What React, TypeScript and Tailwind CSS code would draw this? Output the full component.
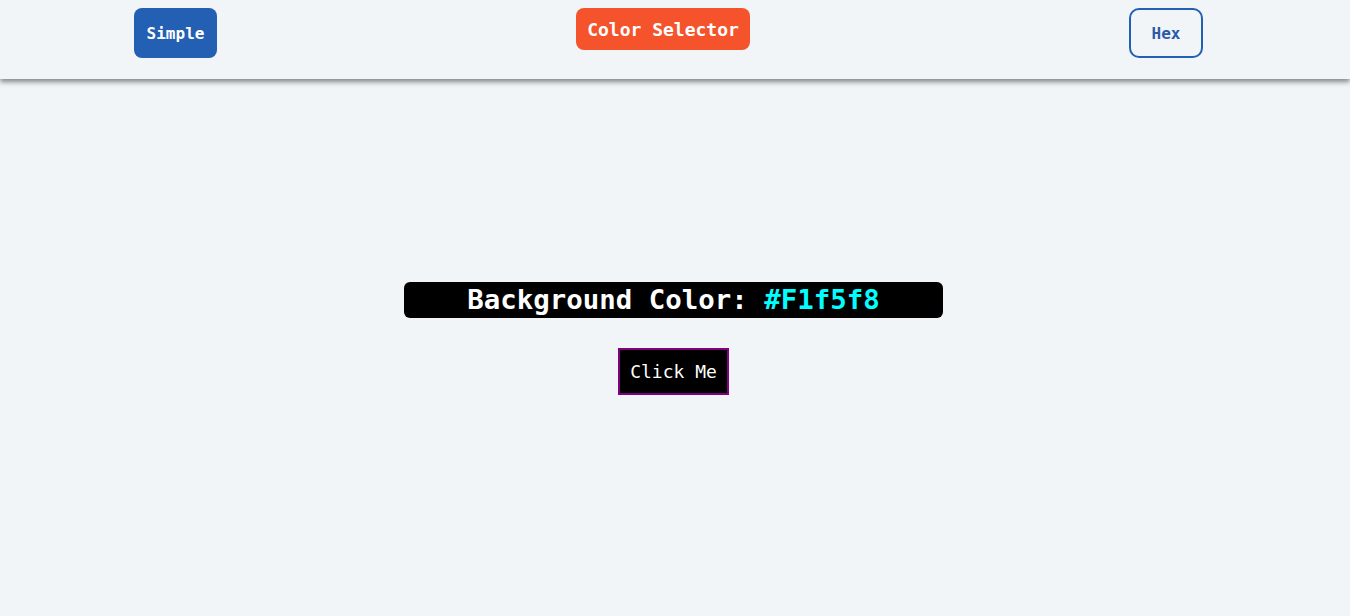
export default function App() {
  return (
    <div className="min-h-screen bg-[#f1f5f8] font-['DejaVu_Sans_Mono',monospace]">
      {/* Top bar */}
      <header className="flex h-[79px] items-start justify-between bg-[#f1f5f8] pl-[134px] pr-[147px] pt-2 shadow-[0_3px_5px_rgba(0,0,0,0.45)]">
        <button className="h-[50px] w-[83px] rounded-lg bg-[#2360b3] pt-[2px] text-[16px] font-bold text-white">
          Simple
        </button>
        <button className="mr-[20px] h-[42px] w-[174px] rounded-lg bg-[#f5532c] text-[18px] font-bold text-white">
          Color Selector
        </button>
        <button className="h-[50px] w-[74px] rounded-[10px] border-2 border-[#2360b3] pt-[2px] text-[16px] font-bold text-[#2b5aa8]">
          Hex
        </button>
      </header>

      <main className="flex flex-col items-center pr-[3px] pt-[203px]">
        <div className="flex h-[36px] w-[539px] items-center justify-center rounded-md bg-black text-[27.4px] font-bold text-white">
          Background Color:&nbsp;<span className="text-[#00ffff]">#F1f5f8</span>
        </div>
        <button className="mt-[30px] h-[47px] w-[111px] border-2 border-[#800080] bg-black text-[18px] text-white">
          Click Me
        </button>
      </main>
    </div>
  );
}
